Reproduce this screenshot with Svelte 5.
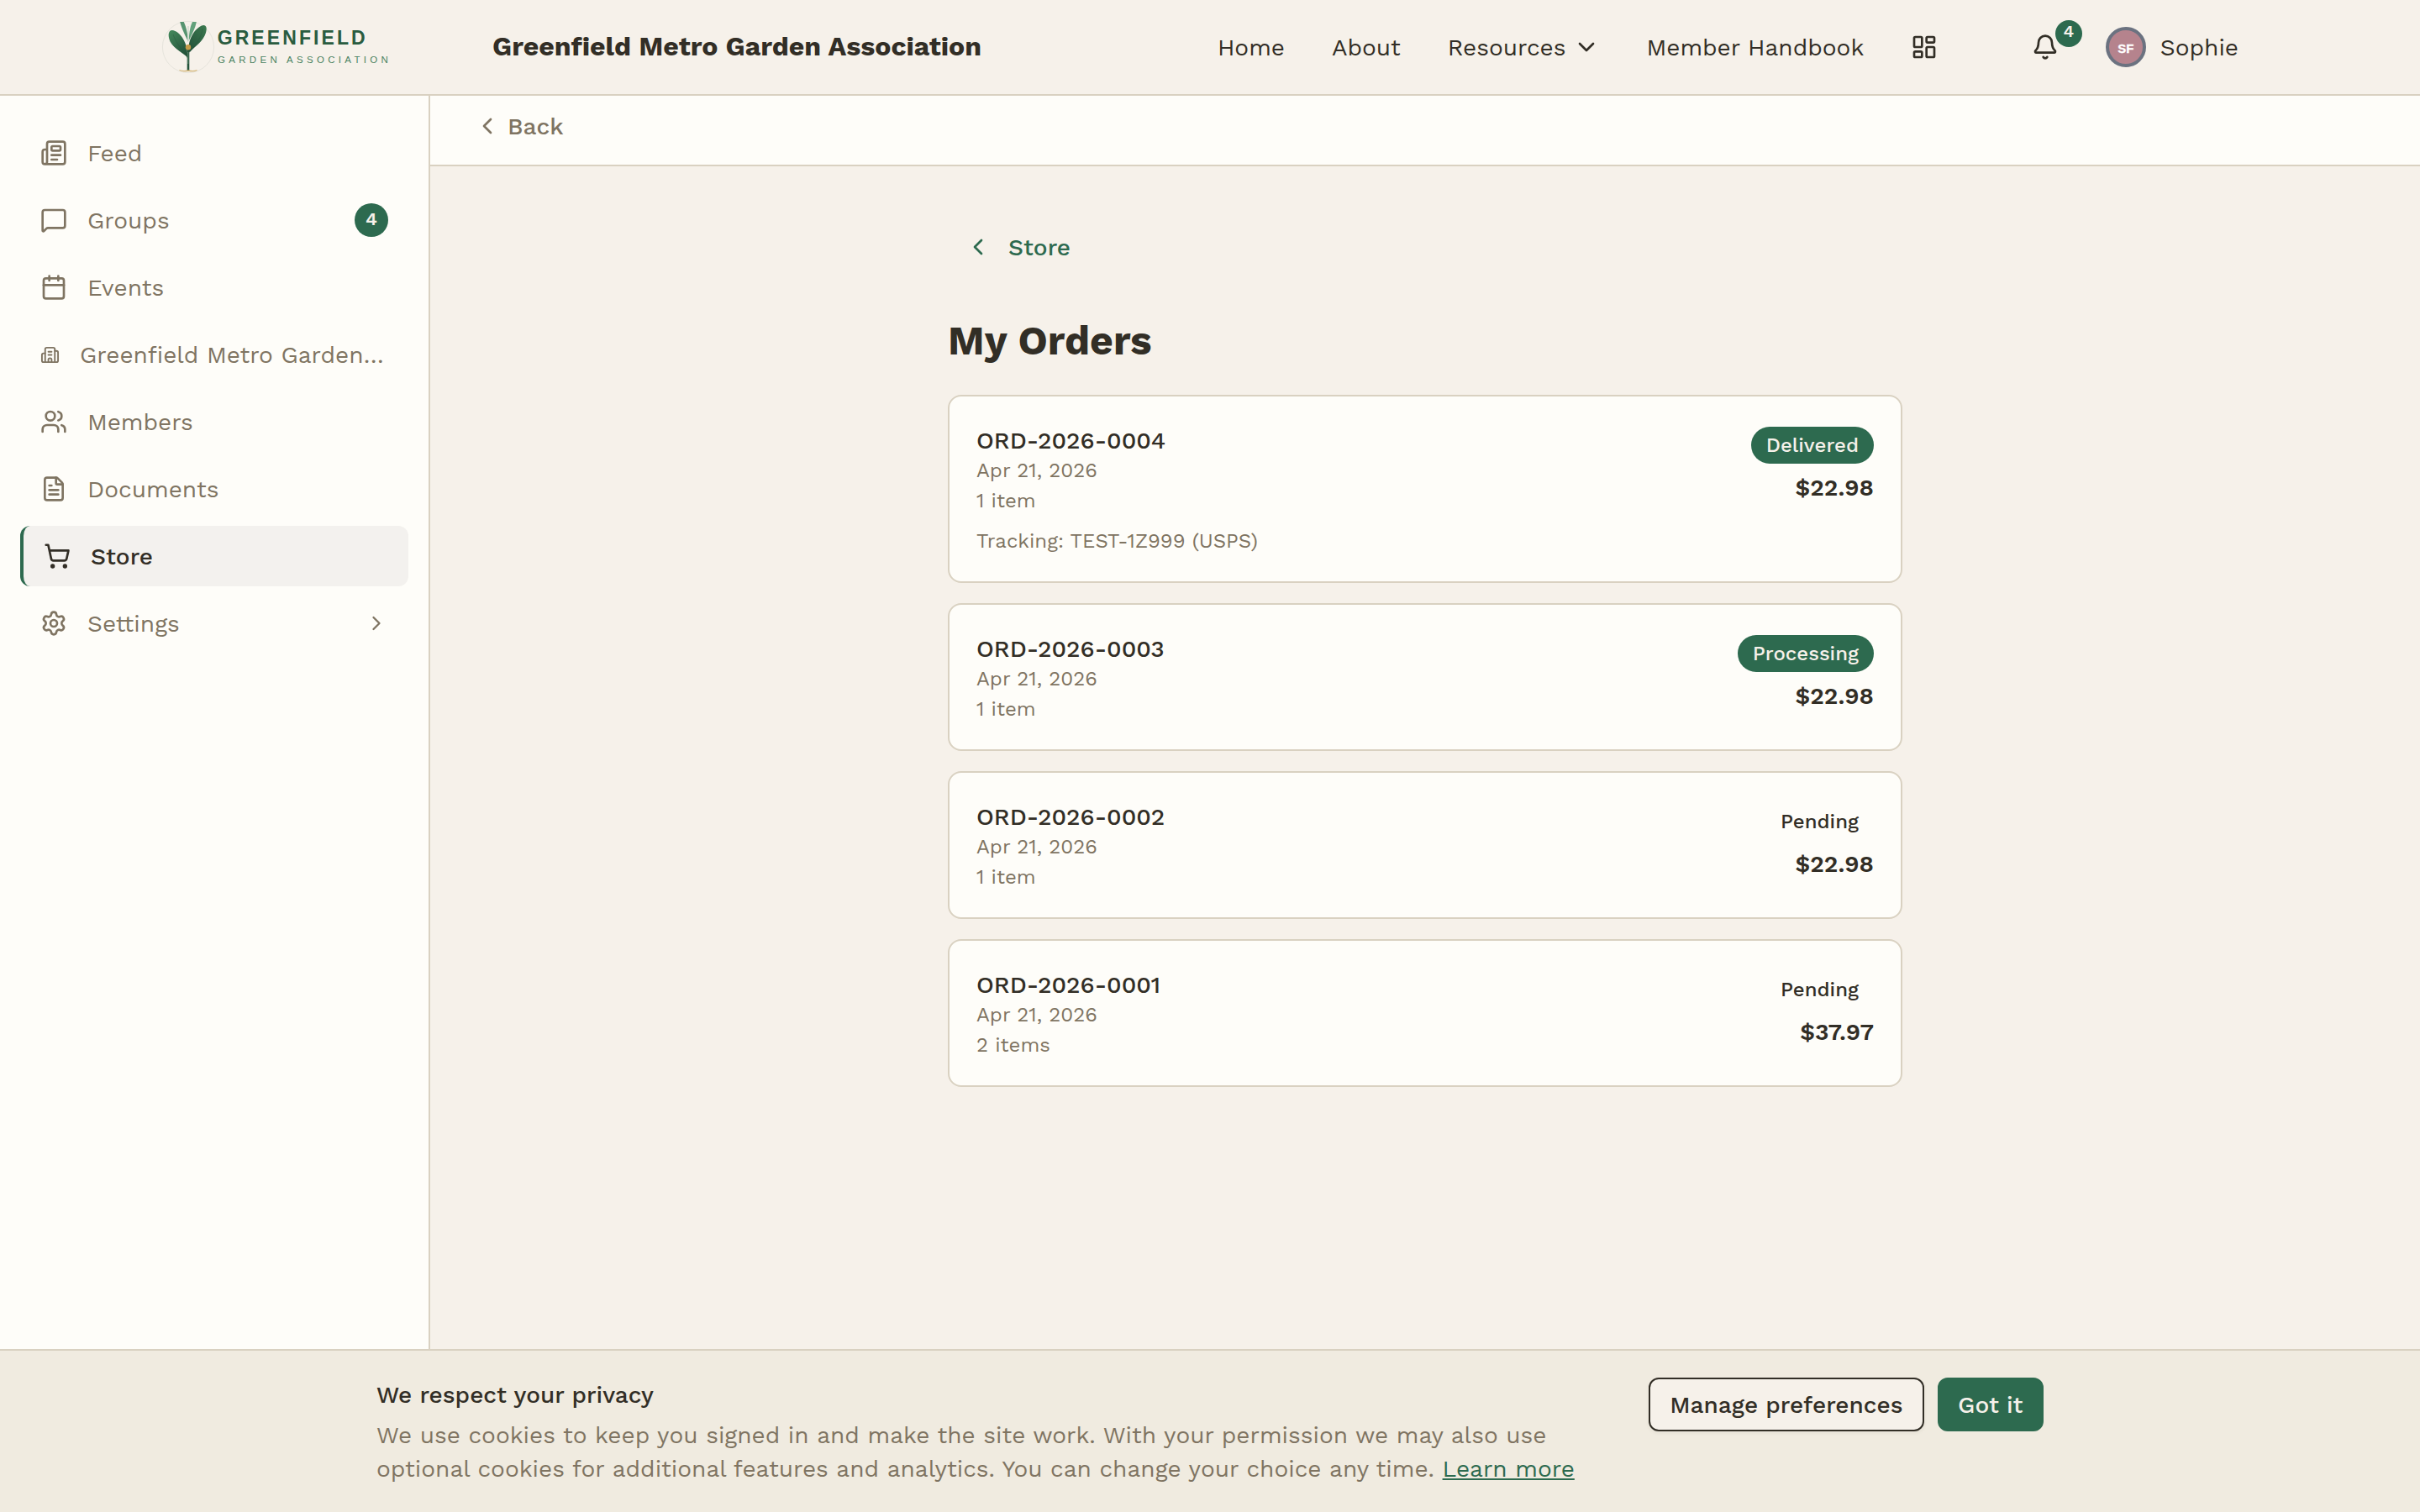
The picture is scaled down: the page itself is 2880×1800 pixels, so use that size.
<script>
  const icons = {
    newspaper:
      '<path d="M15 18h-5"/><path d="M18 14h-8"/><path d="M4 22h16a2 2 0 0 0 2-2V4a2 2 0 0 0-2-2H8a2 2 0 0 0-2 2v16a2 2 0 0 1-4 0v-9a2 2 0 0 1 2-2h2"/><rect width="8" height="4" x="10" y="6" rx="1"/>',
    message:
      '<path d="M22 17a2 2 0 0 1-2 2H6.828a2 2 0 0 0-1.414.586l-2.202 2.202A.71.71 0 0 1 2 21.286V5a2 2 0 0 1 2-2h16a2 2 0 0 1 2 2z"/>',
    calendar:
      '<path d="M8 2v4"/><path d="M16 2v4"/><rect width="18" height="18" x="3" y="4" rx="2"/><path d="M3 10h18"/>',
    building:
      '<path d="M10 12h4"/><path d="M10 8h4"/><path d="M14 21v-3a2 2 0 0 0-4 0v3"/><path d="M6 10H4a2 2 0 0 0-2 2v7a2 2 0 0 0 2 2h16a2 2 0 0 0 2-2V9a2 2 0 0 0-2-2h-2"/><path d="M6 21V5a2 2 0 0 1 2-2h8a2 2 0 0 1 2 2v16"/>',
    users:
      '<path d="M16 21v-2a4 4 0 0 0-4-4H6a4 4 0 0 0-4 4v2"/><path d="M16 3.128a4 4 0 0 1 0 7.744"/><path d="M22 21v-2a4 4 0 0 0-3-3.87"/><circle cx="9" cy="7" r="4"/>',
    file:
      '<path d="M6 22a2 2 0 0 1-2-2V4a2 2 0 0 1 2-2h8a2.4 2.4 0 0 1 1.704.706l3.588 3.588A2.4 2.4 0 0 1 20 8v12a2 2 0 0 1-2 2z"/><path d="M14 2v5a1 1 0 0 0 1 1h5"/><path d="M10 9H8"/><path d="M16 13H8"/><path d="M16 17H8"/>',
    cart:
      '<circle cx="8" cy="21" r="1"/><circle cx="19" cy="21" r="1"/><path d="M2.05 2.05h2l2.66 12.42a2 2 0 0 0 2 1.58h9.78a2 2 0 0 0 1.95-1.57l1.65-7.43H5.12"/>',
    settings:
      '<path d="M9.671 4.136a2.34 2.34 0 0 1 4.659 0 2.34 2.34 0 0 0 3.319 1.915 2.34 2.34 0 0 1 2.33 4.033 2.34 2.34 0 0 0 0 3.831 2.34 2.34 0 0 1-2.33 4.033 2.34 2.34 0 0 0-3.319 1.915 2.34 2.34 0 0 1-4.659 0 2.34 2.34 0 0 0-3.32-1.915 2.34 2.34 0 0 1-2.33-4.033 2.34 2.34 0 0 0 0-3.831A2.34 2.34 0 0 1 6.35 6.051a2.34 2.34 0 0 0 3.319-1.915"/><circle cx="12" cy="12" r="3"/>',
    bell:
      '<path d="M10.268 21a2 2 0 0 0 3.464 0"/><path d="M3.262 15.326A1 1 0 0 0 4 17h16a1 1 0 0 0 .74-1.673C19.41 13.956 18 12.499 18 8A6 6 0 0 0 6 8c0 4.499-1.411 5.956-2.738 7.326"/>',
    dashboard:
      '<rect width="7" height="9" x="3" y="3" rx="1"/><rect width="7" height="5" x="14" y="3" rx="1"/><rect width="7" height="9" x="14" y="12" rx="1"/><rect width="7" height="5" x="3" y="16" rx="1"/>',
    left: '<path d="m15 18-6-6 6-6"/>',
    right: '<path d="m9 18 6-6-6-6"/>',
    down: '<path d="m6 9 6 6 6-6"/>',
  };

  const sidebar = [
    { icon: 'newspaper', label: 'Feed' },
    { icon: 'message', label: 'Groups', badge: 4 },
    { icon: 'calendar', label: 'Events' },
    { icon: 'building', label: 'Greenfield Metro Garden…', small: true },
    { icon: 'users', label: 'Members' },
    { icon: 'file', label: 'Documents' },
    { icon: 'cart', label: 'Store', active: true },
    { icon: 'settings', label: 'Settings', expandable: true },
  ];

  const orders = [
    { id: 'ORD-2026-0004', date: 'Apr 21, 2026', items: '1 item', status: 'Delivered', filled: true, total: '$22.98', tracking: 'TEST-1Z999 (USPS)' },
    { id: 'ORD-2026-0003', date: 'Apr 21, 2026', items: '1 item', status: 'Processing', filled: true, total: '$22.98' },
    { id: 'ORD-2026-0002', date: 'Apr 21, 2026', items: '1 item', status: 'Pending', filled: false, total: '$22.98' },
    { id: 'ORD-2026-0001', date: 'Apr 21, 2026', items: '2 items', status: 'Pending', filled: false, total: '$37.97' },
  ];
</script>

{#snippet icon(name, cls = '')}
  <svg class="icon {cls}" viewBox="0 0 24 24" aria-hidden="true">{@html icons[name]}</svg>
{/snippet}

<div class="page">
  <header class="topbar">
    <svg class="logo" viewBox="0 0 280 72" role="img" aria-label="Greenfield Garden Association">
      <defs>
        <linearGradient id="leaf" x1="0" y1="0" x2="0.6" y2="1">
          <stop offset="0" stop-color="#458a5d" />
          <stop offset="1" stop-color="#24533a" />
        </linearGradient>
        <linearGradient id="leafRight" x1="1" y1="0" x2="0.2" y2="1">
          <stop offset="0" stop-color="#3c7a50" />
          <stop offset="1" stop-color="#24533a" />
        </linearGradient>
      </defs>
      <circle cx="32" cy="36" r="30.6" fill="none" stroke="#e6e4dc" stroke-width="1" />
      <path d="M22.200 6h4.500c2 4 4.800 12 5.300 24C29.500 24 24 14 22.200 6Z" fill="#569470" />
      <path d="M41.800 6h-4.800c-2 4-4 11-4.300 23C35 23 40.500 14 41.800 6Z" fill="#62a17b" />
      <path d="M32 11v18" stroke="#d3dcd0" stroke-width="1.500" />
      <path d="M31 49C29 44 15 39 10.500 29.500C7 21 9 15.500 13 16C22 17 32.500 31 31 49Z" fill="url(#leaf)" />
      <path d="M33.500 42.500C30 31 38 15 48 10.500C53 8.500 55 12.500 53 19C49.500 30 41 34 33.500 42.500Z" fill="url(#leafRight)" />
      <path d="M14 21c3 8 8 16 15 23M49 14c-1 9-6 17-13 24" fill="none" stroke="#24533a" stroke-width=".6" opacity=".6" />
      <path d="M32 38v26" stroke="#24533a" stroke-width="2.600" />
      <path d="M31.800 42v14" stroke="#71997d" stroke-width=".8" />
      <circle cx="32" cy="36.200" r="3.200" fill="#c69c48" />
      <path d="M21.500 63.500c4 1.800 7 1.300 10.500.5c3.500.8 7 1.300 10.500-.5" fill="none" stroke="#d6b77a" stroke-width="1.300" />
      <text class="logo-name" x="66.700" y="32.800" textLength="176" lengthAdjust="spacing">GREENFIELD</text>
      <text class="logo-sub" x="66.900" y="54.800" textLength="203" lengthAdjust="spacing">GARDEN ASSOCIATION</text>
    </svg>
    <h2 class="org">Greenfield Metro Garden Association</h2>
    <nav class="nav">
      <span class="label">Home</span>
      <span class="label">About</span>
      <span class="nav-menu"><span class="label">Resources</span>{@render icon('down')}</span>
      <span class="label">Member Handbook</span>
      {@render icon('dashboard')}
    </nav>
    <div class="account">
      <div class="bell">
        {@render icon('bell')}
        <span class="bell-count">4</span>
      </div>
      <div class="user">
        <span class="avatar">SF</span>
        <span class="label">Sophie</span>
      </div>
    </div>
  </header>

  <div class="body">
    <aside class="sidebar">
      {#each sidebar as item}
        <div class="side-item" class:active={item.active}>
          {@render icon(item.icon, item.small ? 'icon-small' : '')}
          <span class="label side-label">{item.label}</span>
          {#if item.badge}<span class="side-badge">{item.badge}</span>{/if}
          {#if item.expandable}{@render icon('right', 'icon-expand')}{/if}
        </div>
      {/each}
    </aside>

    <div class="content">
      <div class="backbar">{@render icon('left')}<span class="label">Back</span></div>
      <main class="main">
        <div class="store-link">{@render icon('left')}<span class="label">Store</span></div>
        <h1>My Orders</h1>
        <div class="orders">
          {#each orders as order}
            <article class="card">
              <div class="details">
                <div class="order-id">{order.id}</div>
                <div class="meta">{order.date}</div>
                <div class="meta count">{order.items}</div>
                {#if order.tracking}<div class="meta tracking">Tracking: {order.tracking}</div>{/if}
              </div>
              <div class="summary">
                <span class="status" class:filled={order.filled}>{order.status}</span>
                <span class="total">{order.total}</span>
              </div>
            </article>
          {/each}
        </div>
      </main>
    </div>
  </div>

  <footer class="consent">
    <div class="consent-text">
      <div class="consent-title">We respect your privacy</div>
      <p>
        We use cookies to keep you signed in and make the site work. With your permission we may also use
        <br />optional cookies for additional features and analytics. You can change your choice any time. <span class="learn">Learn more</span>
      </p>
    </div>
    <div class="consent-actions">
      <button class="btn outline">Manage preferences</button>
      <button class="btn solid">Got it</button>
    </div>
  </footer>
</div>

<style>
  :global(body) {
    margin: 0;
  }
  .page {
    display: flex;
    flex-direction: column;
    width: 2880px;
    height: 1800px;
    overflow: hidden;
    box-sizing: border-box;
    background: #f6f1ea;
    color: #322e26;
    font-family: 'Work Sans', Inter, 'Open Sans', sans-serif;
    font-size: 28px;
    line-height: 40px;
  }
  .page * {
    box-sizing: border-box;
  }
  .label {
    padding-top: 2px;
  }
  .icon {
    width: 32px;
    height: 32px;
    flex: none;
    fill: none;
    stroke: currentColor;
    stroke-width: 2;
    stroke-linecap: round;
    stroke-linejoin: round;
  }

  .topbar {
    display: flex;
    align-items: center;
    flex: none;
    height: 114px;
    padding: 0 216px 0 192px;
    border-bottom: 2px solid #d9d1c1;
  }
  .logo {
    width: 280px;
    height: 72px;
    flex: none;
  }
  .logo-name {
    font: bold 23px 'Liberation Sans', Arial, sans-serif;
    fill: #2a5c40;
  }
  .logo-sub {
    font: 11.5px 'Liberation Sans', Arial, sans-serif;
    fill: #4d8463;
  }
  .org {
    width: 863px;
    margin: 0 0 0 114px;
    padding-bottom: 2px;
    font-size: 32px;
    font-weight: 700;
    white-space: nowrap;
  }
  .nav {
    display: flex;
    align-items: center;
    gap: 56px;
    white-space: nowrap;
  }
  .nav-menu {
    display: flex;
    align-items: center;
    gap: 8px;
  }
  .account {
    display: flex;
    align-items: center;
    gap: 56px;
    margin-left: auto;
  }
  .bell {
    position: relative;
    display: flex;
  }
  .bell-count {
    position: absolute;
    top: -16px;
    left: 28px;
    width: 32px;
    height: 32px;
    border-radius: 50%;
    background: #2d6a4f;
    color: #f6f1ea;
    font-size: 20px;
    font-weight: 600;
    line-height: 27px;
    text-align: center;
  }
  .user {
    display: flex;
    align-items: center;
    gap: 17px;
  }
  .avatar {
    display: flex;
    align-items: center;
    justify-content: center;
    width: 48px;
    height: 48px;
    border: 4px solid #6b7280;
    border-radius: 50%;
    background: #b5838d;
    color: #fff;
    font: bold 15px 'Liberation Sans', Arial, sans-serif;
    -webkit-text-stroke: 0.3px #fff;
    padding-top: 3px;
  }

  .body {
    display: flex;
    flex: 1;
    min-height: 0;
  }
  .sidebar {
    display: flex;
    flex-direction: column;
    gap: 8px;
    flex: none;
    width: 512px;
    padding: 32px 24px;
    background: #fefdf9;
    border-right: 2px solid #d9d1c1;
    color: #7f7462;
  }
  .side-item {
    display: flex;
    align-items: center;
    gap: 24px;
    height: 72px;
    padding: 0 24px;
    border-radius: 12px;
    white-space: nowrap;
  }
  .side-item.active {
    border-left: 4px solid #2d6a4f;
    background: #f3f1ee;
    color: #322e26;
    font-weight: 500;
  }
  .side-label {
    flex: 1;
  }
  .icon-small {
    width: 23px;
    height: 23px;
  }
  .icon-expand {
    width: 28px;
    height: 28px;
  }
  .side-badge {
    width: 40px;
    height: 40px;
    border-radius: 50%;
    background: #2d6a4f;
    color: #f6f1ea;
    font-size: 22px;
    font-weight: 600;
    line-height: 37px;
    text-align: center;
  }

  .content {
    flex: 1;
    display: flex;
    flex-direction: column;
  }
  .backbar {
    display: flex;
    align-items: center;
    gap: 8px;
    flex: none;
    height: 84px;
    padding: 0 52px 10px;
    background: #fefdf9;
    border-bottom: 2px solid #d9d1c1;
    color: #7f7462;
    font-weight: 500;
  }
  .main {
    width: 1136px;
    margin: 0 auto;
    padding-top: 64px;
  }
  .store-link {
    display: flex;
    align-items: center;
    gap: 20px;
    height: 64px;
    padding-left: 20px;
    color: #2d6a4f;
    font-weight: 500;
  }
  h1 {
    margin: 48px 0 32px;
    font-size: 48px;
    font-weight: 700;
    line-height: 64px;
  }
  .orders {
    display: flex;
    flex-direction: column;
    gap: 24px;
  }
  .card {
    display: flex;
    justify-content: space-between;
    padding: 32px;
    border: 2px solid #d9d1c1;
    border-radius: 16px;
    background: #fefdf9;
  }
  .order-id {
    height: 40px;
    padding-top: 1px;
    font-weight: 500;
  }
  .meta {
    color: #7f7462;
    font-size: 24px;
    line-height: 32px;
  }
  .count {
    margin-top: 4px;
  }
  .tracking {
    margin-top: 16px;
  }
  .summary {
    display: flex;
    flex-direction: column;
    align-items: flex-end;
    padding-top: 4px;
  }
  .status {
    padding: 0 18px;
    border-radius: 22px;
    font-size: 24px;
    font-weight: 500;
    line-height: 44px;
  }
  .status.filled {
    background: #2d6a4f;
    color: #f6f1ea;
  }
  .total {
    margin-top: 9px;
    font-weight: 600;
  }

  .consent {
    display: flex;
    justify-content: space-between;
    flex: none;
    height: 194px;
    padding: 32px 448px 0;
    border-top: 2px solid #d9d1c1;
    background: #f0ebe0;
  }
  .consent-title {
    padding-top: 1px;
    font-weight: 500;
  }
  p {
    margin: 8px 0 0;
    color: #7f7462;
    white-space: nowrap;
  }
  .learn {
    color: #2d6a4f;
    text-decoration: underline;
    text-decoration-thickness: 2px;
    text-underline-offset: 2px;
  }
  .consent-actions {
    display: flex;
    gap: 16px;
  }
  .btn {
    height: 64px;
    padding: 2px 23px 0;
    border: 2px solid #2d6a4f;
    border-radius: 12px;
    font: inherit;
    font-weight: 500;
  }
  .btn.outline {
    border-color: #322e26;
    background: #f6f1ea;
    color: #322e26;
    box-shadow: 0 2px 4px rgba(50, 46, 38, 0.06);
  }
  .btn.solid {
    padding: 2px 22.5px 0;
    background: #2d6a4f;
    color: #f6f1ea;
  }
</style>
